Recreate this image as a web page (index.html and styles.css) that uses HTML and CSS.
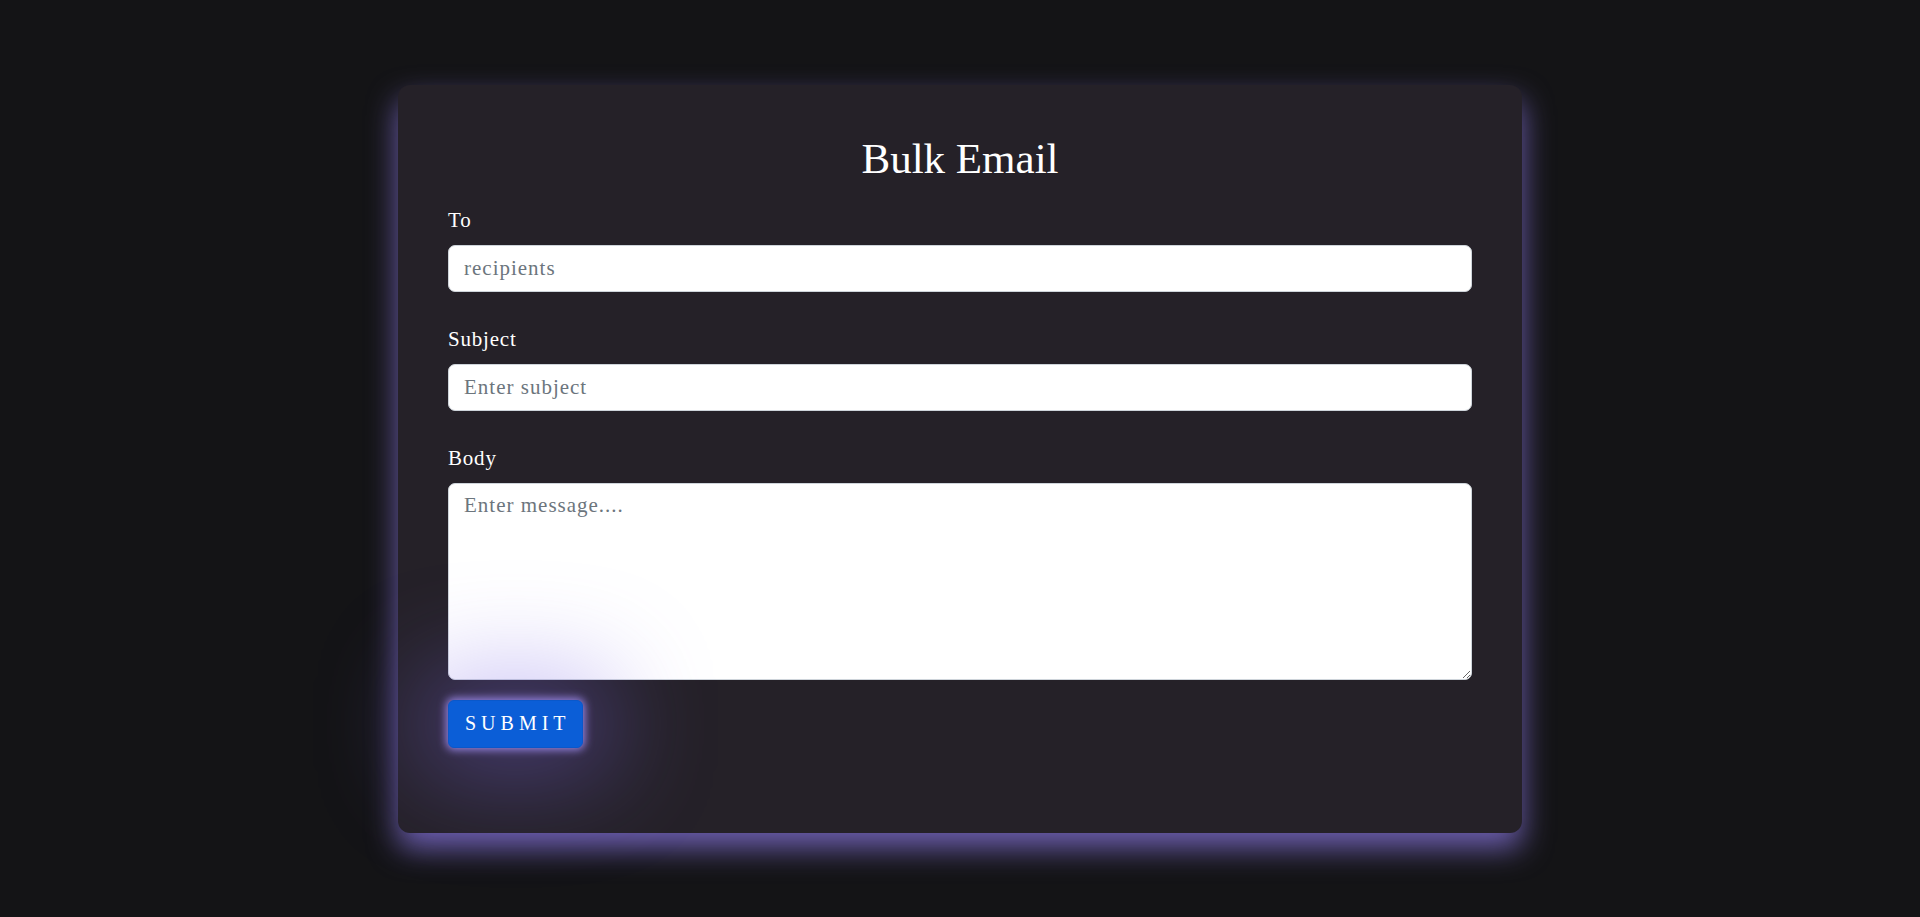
FILE: index.html
```html
<!DOCTYPE html>
<html lang="en">
<head>
<meta charset="utf-8">
<title>Bulk Email</title>
<link rel="stylesheet" href="styles.css">
</head>
<body>
<main class="card">
  <h1 class="title">Bulk Email</h1>
  <form class="form">
    <div class="field">
      <label class="label" for="to">To</label>
      <input class="control" id="to" type="text" placeholder="recipients">
    </div>
    <div class="field">
      <label class="label" for="subject">Subject</label>
      <input class="control" id="subject" type="text" placeholder="Enter subject">
    </div>
    <div class="field field-last">
      <label class="label" for="body">Body</label>
      <textarea class="control area" id="body" placeholder="Enter message...."></textarea>
    </div>
    <div class="actions">
      <button class="submit" type="button">Submit</button>
    </div>
  </form>
</main>
</body>
</html>
```

FILE: styles.css
```css
html, body {
  margin: 0;
  padding: 0;
}

body {
  min-height: 100vh;
  background: #141416;
  display: flex;
  align-items: center;
  justify-content: center;
  font-family: "Liberation Serif", "Times New Roman", serif;
  color: #fff;
}

.card {
  width: 1124px;
  box-sizing: border-box;
  padding: 48px 50px 85px;
  background: #252128;
  border-radius: 12px;
  box-shadow: 0 15px 30px rgb(108, 94, 174);
}

.title {
  margin: 0 0 21px;
  font-size: 43px;
  line-height: 52px;
  font-weight: 400;
  text-align: center;
  color: #fff;
}

.form {
  margin: 0;
}

.field {
  margin-bottom: 33px;
}

.field + .field-last {
  margin-top: 1px;
}

.field-last {
  margin-bottom: 0;
}

.label {
  display: block;
  font-size: 21px;
  letter-spacing: 0.8px;
  line-height: 28px;
  margin-bottom: 11px;
  color: #fff;
}

.control {
  display: block;
  width: 100%;
  box-sizing: border-box;
  height: 47px;
  margin: 0;
  padding: 0 15px;
  border: 1px solid #ced4da;
  border-radius: 7px;
  background: #fff;
  color: #212529;
  font-family: "Liberation Serif", "Times New Roman", serif;
  font-size: 21px;
  letter-spacing: 1px;
  outline: none;
}

.control::placeholder {
  color: #6c757d;
  opacity: 1;
}

.area {
  height: 197px;
  padding: 6px 15px;
  line-height: 1.5;
  resize: vertical;
}

.actions {
  margin-top: 20px;
}

.submit {
  height: 48px;
  padding: 0 11px 0 16px;
  background: #0b5ed7;
  border: 1px solid #0a58ca;
  border-radius: 6px;
  color: #fff;
  font-family: "Liberation Serif", "Times New Roman", serif;
  font-size: 20px;
  letter-spacing: 5px;
  text-transform: uppercase;
  cursor: pointer;
  box-shadow: 0 0 9px 2px rgba(160, 140, 240, 0.9), 0 0 100px 30px rgba(125, 105, 230, 0.4);
}
```
